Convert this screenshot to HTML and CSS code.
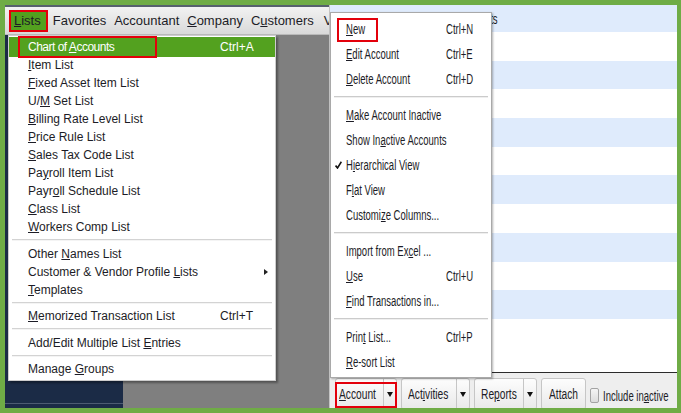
FILE: index.html
```html
<!DOCTYPE html>
<html>
<head>
<meta charset="utf-8">
<link rel="stylesheet" href="styles.css">
</head>
<body>
<div class="frame">
  <div class="app">
    <div class="topstrip"></div>
    <div class="menubar">
      <span class="mb-item active"><u>L</u>ists</span>
      <span class="mb-item">Favorites</span>
      <span class="mb-item">Accountant</span>
      <span class="mb-item"><u>C</u>ompany</span>
      <span class="mb-item">C<u>u</u>stomers</span>
      <span class="mb-item last">V</span>
    </div>
    <div class="app-body">
      <div class="sidebar"><div class="sidebar-main"></div><div class="sidebar-foot"></div></div>
      <div class="workspace"></div>
    </div>
  </div>
  <div class="window">
    <div class="list">
      <div class="row head"><span class="col-head"><span class="nt nt-r">Accounts</span></span></div>
      <div class="row"></div>
      <div class="row"></div>
      <div class="row"></div>
      <div class="row"></div>
      <div class="row"></div>
      <div class="row"></div>
      <div class="row"></div>
      <div class="row"></div>
      <div class="row"></div>
      <div class="row"></div>
      <div class="row"></div>
    </div>
    <div class="toolbar">
      <div class="btn account">
        <span class="btn-label w-account"><span class="nt bt"><u>A</u>ccount</span></span><span class="btn-arrow"></span>
        <span class="mark mark-account"></span>
      </div>
      <div class="btn">
        <span class="btn-label w-activities"><span class="nt bt">Act<u>i</u>vities</span></span><span class="btn-arrow"></span>
      </div>
      <div class="btn">
        <span class="btn-label w-reports"><span class="nt bt">Re<u>p</u>orts</span></span><span class="btn-arrow"></span>
      </div>
      <div class="btn">
        <span class="btn-label w-attach"><span class="nt bt">Attach</span></span>
      </div>
      <div class="incl">
        <span class="check"></span>
        <span class="incl-text"><span class="nt it">Include in<u>a</u>ctive</span></span>
      </div>
    </div>
  </div>
</div>

<div class="menu lists-menu">
  <div class="mi hl"><span class="lbl">Chart of <u>A</u>ccounts</span><span class="sc">Ctrl+A</span><span class="mark mark-chart"></span></div>
  <div class="mi"><span class="lbl"><u>I</u>tem List</span></div>
  <div class="mi"><span class="lbl"><u>F</u>ixed Asset Item List</span></div>
  <div class="mi"><span class="lbl">U/<u>M</u> Set List</span></div>
  <div class="mi"><span class="lbl"><u>B</u>illing Rate Level List</span></div>
  <div class="mi"><span class="lbl"><u>P</u>rice Rule List</span></div>
  <div class="mi"><span class="lbl"><u>S</u>ales Tax Code List</span></div>
  <div class="mi"><span class="lbl">Pa<u>y</u>roll Item List</span></div>
  <div class="mi"><span class="lbl">Payr<u>o</u>ll Schedule List</span></div>
  <div class="mi"><span class="lbl"><u>C</u>lass List</span></div>
  <div class="mi"><span class="lbl"><u>W</u>orkers Comp List</span></div>
  <div class="sep"></div>
  <div class="mi"><span class="lbl">Other <u>N</u>ames List</span></div>
  <div class="mi"><span class="lbl">Customer &amp; Vendor Profile <u>L</u>ists</span><span class="sc sub"><span class="subarrow"></span></span></div>
  <div class="mi"><span class="lbl"><u>T</u>emplates</span></div>
  <div class="sep"></div>
  <div class="mi"><span class="lbl"><u>M</u>emorized Transaction List</span><span class="sc">Ctrl+T</span></div>
  <div class="sep"></div>
  <div class="mi"><span class="lbl">Add/Edit Multiple List <u>E</u>ntries</span></div>
  <div class="sep"></div>
  <div class="mi"><span class="lbl">Manage <u>G</u>roups</span></div>
</div>

<div class="menu account-menu">
  <div class="ai"><span class="ck"></span><span class="lbl"><span class="nt"><u>N</u>ew</span></span><span class="sc"><span class="nt">Ctrl+N</span></span><span class="mark mark-new"></span></div>
  <div class="ai"><span class="ck"></span><span class="lbl"><span class="nt"><u>E</u>dit Account</span></span><span class="sc"><span class="nt">Ctrl+E</span></span></div>
  <div class="ai"><span class="ck"></span><span class="lbl"><span class="nt"><u>D</u>elete Account</span></span><span class="sc"><span class="nt">Ctrl+D</span></span></div>
  <div class="asep"></div>
  <div class="ai"><span class="ck"></span><span class="lbl"><span class="nt"><u>M</u>ake Account Inactive</span></span></div>
  <div class="ai"><span class="ck"></span><span class="lbl"><span class="nt">Show In<u>a</u>ctive Accounts</span></span></div>
  <div class="ai"><span class="ck"><svg width="7" height="8" viewBox="0 0 7 8"><path d="M0.6 4.6 L2.5 7 L6.4 0.8" fill="none" stroke="#111" stroke-width="1.6"/></svg></span><span class="lbl"><span class="nt">H<u>i</u>erarchical View</span></span></div>
  <div class="ai"><span class="ck"></span><span class="lbl"><span class="nt">F<u>l</u>at View</span></span></div>
  <div class="ai"><span class="ck"></span><span class="lbl"><span class="nt">Customi<u>z</u>e Columns...</span></span></div>
  <div class="asep"></div>
  <div class="ai"><span class="ck"></span><span class="lbl"><span class="nt">Import from Ex<u>c</u>el ...</span></span></div>
  <div class="ai"><span class="ck"></span><span class="lbl"><span class="nt"><u>U</u>se</span></span><span class="sc"><span class="nt">Ctrl+U</span></span></div>
  <div class="ai"><span class="ck"></span><span class="lbl"><span class="nt"><u>F</u>ind Transactions in...</span></span></div>
  <div class="asep"></div>
  <div class="ai"><span class="ck"></span><span class="lbl"><span class="nt">Prin<u>t</u> List...</span></span><span class="sc"><span class="nt">Ctrl+P</span></span></div>
  <div class="ai"><span class="ck"></span><span class="lbl"><span class="nt"><u>R</u>e-sort List</span></span></div>
</div>
</body>
</html>
```

FILE: styles.css
```css
html, body {
  margin: 0;
  padding: 0;
}
body {
  width: 681px;
  height: 413px;
  overflow: hidden;
  position: relative;
  background: #6fac46;
  font-family: "Liberation Sans", Arial, sans-serif;
  color: #1c1c26;
}
u { text-decoration: underline; text-underline-offset: 1px; }

/* horizontally condensed text (the reference is a narrow UI font) */
.nt {
  display: inline-block;
  white-space: nowrap;
  font-size: 14px;
  transform: scaleX(0.68);
  transform-origin: 0 50%;
}
.nt-r { transform-origin: 100% 50%; }
.nt.bt { transform: scaleX(0.73); }

.frame {
  display: flex;
  height: 413px;
  box-sizing: border-box;
  padding: 5px 4px 5px 5px;
}

/* left application */
.app {
  width: 324px;
  display: flex;
  flex-direction: column;
}
.topstrip {
  height: 2px;
  background: #56606e;
}
.menubar {
  height: 27px;
  border-bottom: 1px solid #b9b9b9;
  background: linear-gradient(#f2f2f2, #d9d9d9);
  display: flex;
  align-items: center;
  padding-left: 4px;
  font-size: 13px;
  white-space: nowrap;
  overflow: hidden;
}
.mb-item {
  padding: 0 4px;
  line-height: 18px;
}
.mb-item.last { padding-left: 6px; }
.mb-item.active {
  box-sizing: border-box;
  height: 22px;
  line-height: 18px;
  padding: 0 5px 0 3px;
  margin-right: 1px;
  background: #53a11f;
  border: 2px solid #e3000b;
}
.app-body {
  flex: 1;
  display: flex;
}
.sidebar {
  width: 118px;
  background: #1b2b46;
  display: flex;
  flex-direction: column;
}
.sidebar-main { flex: 1; }
.sidebar-foot {
  height: 4px;
  border-top: 1px solid #4d5b72;
}
.workspace {
  flex: 1;
  background: #7f7f7f;
}

/* right window */
.window {
  width: 348px;
  box-sizing: border-box;
  border-left: 1px solid #c4c4c4;
  background: #fff;
  display: flex;
  flex-direction: column;
}
.list {
  height: 367px;
  border-bottom: 1px solid #2b2b2b;
  overflow: hidden;
}
.row {
  height: 28.7px;
}
.row:nth-child(odd) {
  background: #dfebfc;
}
.row.head {
  height: 27px;
  display: flex;
  align-items: center;
}
.col-head {
  margin-left: 162px;
  width: 6px;
  display: flex;
  justify-content: flex-end;
  overflow: hidden;
}

.toolbar {
  height: 35px;
  box-sizing: border-box;
  background: #eeeeee;
  display: flex;
  align-items: flex-start;
  gap: 4px;
  padding: 5px 0 0 5px;
  overflow: hidden;
}
.btn {
  position: relative;
  display: flex;
  height: 32px;
  box-sizing: border-box;
  border: 1px solid #c6c6c6;
  border-radius: 3px;
  background: linear-gradient(#fdfdfd, #e9e9e9);
  flex: none;
}
.btn-label {
  display: flex;
  align-items: center;
  flex: none;
  box-sizing: border-box;
  overflow: visible;
  padding-bottom: 1px;
}
.w-account { width: 47px; padding-left: 3px; }
.w-activities { width: 54px; padding-left: 6px; }
.w-reports { width: 48px; padding-left: 6px; }
.w-attach { width: 43px; padding-left: 7px; }
.btn-arrow {
  width: 12px;
  border-left: 1px solid #c6c6c6;
  display: flex;
  align-items: center;
  justify-content: center;
}
.btn-arrow::after {
  content: "";
  width: 0;
  height: 0;
  border-top: 5px solid #111;
  border-left: 3.5px solid transparent;
  border-right: 3.5px solid transparent;
}
.incl {
  display: flex;
  align-items: center;
  height: 32px;
}
.check {
  width: 9px;
  height: 15px;
  box-sizing: border-box;
  border: 1px solid #a3a3a3;
  border-radius: 2px;
  background: linear-gradient(#f4f4f4, #dcdcdc);
  margin-top: 3px;
}
.incl-text {
  margin-left: 4px;
  margin-top: 3px;
}

/* annotation boxes */
.mark {
  position: absolute;
  box-sizing: border-box;
  border: 2px solid #e3000b;
}
.mark-account {
  left: -1px;
  top: 3px;
  width: 62px;
  height: 26px;
}
.mark-chart {
  left: 9px;
  top: -1px;
  width: 139px;
  height: 22px;
}
.mark-new {
  left: 6px;
  top: 2px;
  width: 41px;
  height: 24px;
}

/* menus */
.menu {
  position: absolute;
  background: #fff;
  box-sizing: border-box;
}
.lists-menu {
  left: 8px;
  top: 35px;
  width: 268px;
  border: 1px solid #cdcdcd;
  padding: 2px 0;
  box-shadow: 2px 2px 2px rgba(0, 0, 0, 0.35);
  font-size: 12px;
}
.mi {
  position: relative;
  height: 18px;
  display: flex;
  align-items: center;
  padding-left: 19px;
  white-space: nowrap;
}
.mi .lbl { flex: 1; }
.mi .sc { width: 55px; flex: none; }
.mi.hl {
  height: 20px;
  margin: -1px 0;
  background: #53a11f;
  color: #fff;
}
.mi.hl .lbl { letter-spacing: -0.5px; }
.sc.sub {
  display: flex;
  justify-content: flex-end;
  padding-right: 7px;
  box-sizing: border-box;
}
.subarrow {
  width: 0;
  height: 0;
  border-left: 4px solid #222;
  border-top: 3.5px solid transparent;
  border-bottom: 3.5px solid transparent;
}
.sep {
  height: 8.5px;
  display: flex;
  align-items: center;
  padding: 0 3px;
}
.sep::after {
  content: "";
  flex: 1;
  height: 1px;
  background: #d3d3d3;
  border-bottom: 1px solid #f4f4f4;
}

.account-menu {
  left: 330px;
  top: 12px;
  width: 162px;
  border: 1px solid #a9a9a9;
  padding: 3px 0;
  box-shadow: 1px 1px 2px rgba(0, 0, 0, 0.3);
}
.ai {
  position: relative;
  height: 25px;
  display: flex;
  align-items: center;
  white-space: nowrap;
}
.ai .ck {
  width: 15px;
  flex: none;
  display: flex;
  justify-content: center;
  align-items: center;
}
.ai .lbl { flex: 1; min-width: 0; }
.ai .sc { width: 45px; flex: none; }
.asep {
  height: 11px;
  display: flex;
  align-items: center;
  padding: 0 3px;
}
.asep::after {
  content: "";
  flex: 1;
  height: 1px;
  background: #cbcbcb;
  border-bottom: 1px solid #efefef;
}
```
